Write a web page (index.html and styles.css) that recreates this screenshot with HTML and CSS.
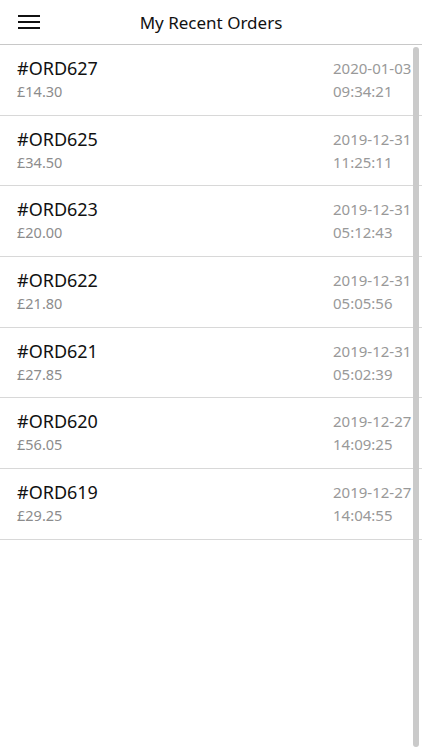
FILE: index.html
```html
<!DOCTYPE html>
<html lang="en">
<head>
    <meta charset="UTF-8">
    <meta name="viewport" content="width=device-width, initial-scale=1.0">
    <title>My Recent Orders</title>
    <link rel="stylesheet" href="styles.css">
</head>
<body>
    <div class="header">
        <button class="menu-btn" aria-label="Menu">
            <svg width="22" height="14" viewBox="0 0 22 14">
                <path d="M0 1H22M0 7H22M0 13H22" stroke="#111" stroke-width="2"/>
            </svg>
        </button>
        <div class="title">My Recent Orders</div>
    </div>

    <div class="order-list">
        <div class="order">
            <div class="order-left">
                <div class="order-id">#ORD627</div>
                <div class="order-price">£14.30</div>
            </div>
            <div class="order-date">
                <div>2020-01-03</div>
                <div>09:34:21</div>
            </div>
        </div>
        <div class="order">
            <div class="order-left">
                <div class="order-id">#ORD625</div>
                <div class="order-price">£34.50</div>
            </div>
            <div class="order-date">
                <div>2019-12-31</div>
                <div>11:25:11</div>
            </div>
        </div>
        <div class="order">
            <div class="order-left">
                <div class="order-id">#ORD623</div>
                <div class="order-price">£20.00</div>
            </div>
            <div class="order-date">
                <div>2019-12-31</div>
                <div>05:12:43</div>
            </div>
        </div>
        <div class="order">
            <div class="order-left">
                <div class="order-id">#ORD622</div>
                <div class="order-price">£21.80</div>
            </div>
            <div class="order-date">
                <div>2019-12-31</div>
                <div>05:05:56</div>
            </div>
        </div>
        <div class="order">
            <div class="order-left">
                <div class="order-id">#ORD621</div>
                <div class="order-price">£27.85</div>
            </div>
            <div class="order-date">
                <div>2019-12-31</div>
                <div>05:02:39</div>
            </div>
        </div>
        <div class="order">
            <div class="order-left">
                <div class="order-id">#ORD620</div>
                <div class="order-price">£56.05</div>
            </div>
            <div class="order-date">
                <div>2019-12-27</div>
                <div>14:09:25</div>
            </div>
        </div>
        <div class="order">
            <div class="order-left">
                <div class="order-id">#ORD619</div>
                <div class="order-price">£29.25</div>
            </div>
            <div class="order-date">
                <div>2019-12-27</div>
                <div>14:04:55</div>
            </div>
        </div>
    </div>

    <div class="scrollbar"></div>
</body>
</html>
```

FILE: styles.css
```css
body {
    font-family: 'Noto Sans', sans-serif;
    background: white;
    margin: 0;
    color: #111;
    height: 750px;
    overflow: hidden;
}

.header {
    height: 44px;
    display: flex;
    align-items: center;
    justify-content: center;
    border-bottom: 1px solid #c8c8c8;
    position: relative;
}

.menu-btn {
    position: absolute;
    left: 18px;
    top: 15px;
    background: none;
    border: none;
    padding: 0;
    display: flex;
}

.title {
    font-size: 17px;
}

.order {
    height: 69.7px;
    display: flex;
    justify-content: space-between;
    align-items: center;
    padding: 0 7px 0 17px;
    border-bottom: 1px solid #d8d8d8;
}

.order-id {
    font-size: 18px;
    line-height: 23px;
}

.order-price,
.order-date {
    font-size: 14.5px;
    line-height: 23px;
    color: #8c8c8c;
}

.order-date {
    width: 82px;
    font-size: 15px;
    color: #999;
}

.scrollbar {
    position: absolute;
    left: 413px;
    top: 47px;
    width: 6px;
    height: 700px;
    border-radius: 3px;
    background: #cacaca;
}
```
